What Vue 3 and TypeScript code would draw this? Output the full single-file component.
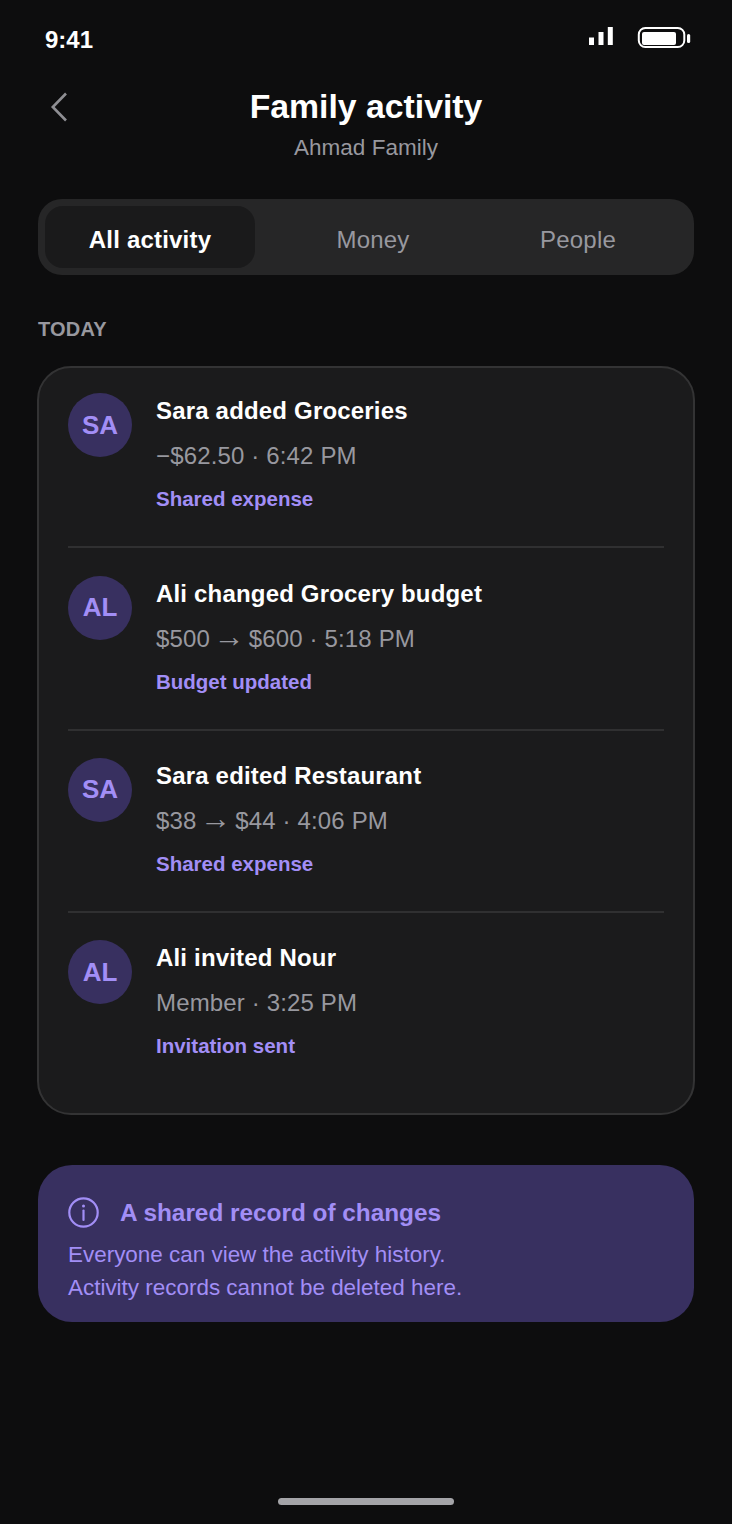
<script setup lang="ts">
interface Activity {
  initials: string;
  title: string;
  detail: string[];
  tag: string;
}

const tabs = ['All activity', 'Money', 'People'];

// detail is split where the arrow goes, the arrow is drawn a bit bigger than the text
const activities: Activity[] = [
  { initials: 'SA', title: 'Sara added Groceries', detail: ['−$62.50 · 6:42 PM'], tag: 'Shared expense' },
  { initials: 'AL', title: 'Ali changed Grocery budget', detail: ['$500 ', ' $600 · 5:18 PM'], tag: 'Budget updated' },
  { initials: 'SA', title: 'Sara edited Restaurant', detail: ['$38 ', ' $44 · 4:06 PM'], tag: 'Shared expense' },
  { initials: 'AL', title: 'Ali invited Nour', detail: ['Member · 3:25 PM'], tag: 'Invitation sent' },
];
</script>

<template>
  <div class="screen">
    <div class="status">
      <span class="time">9:41</span>
      <div class="status-icons">
        <svg class="signal" width="24" height="18" viewBox="0 0 24 18" fill="#fff">
          <rect x="0" y="10.5" width="5" height="7.5" />
          <rect x="9.5" y="5" width="5" height="13" />
          <rect x="18.8" y="0" width="5" height="18" />
        </svg>
        <svg width="56" height="24" viewBox="0 0 56 24" fill="none">
          <rect x="1.8" y="2" width="45.5" height="19" rx="6.5" stroke="#fff" stroke-width="2" />
          <rect x="5" y="6" width="34" height="13" rx="2" fill="#fff" />
          <rect x="50" y="8" width="3.2" height="9" rx="1.6" fill="#fff" />
        </svg>
      </div>
    </div>

    <header class="header">
      <svg class="back" width="18" height="30" viewBox="0 0 18 30" fill="none">
        <path d="M16 1.5 L2.8 15 L16 28.5" stroke="#8e8e93" stroke-width="2.6" />
      </svg>
      <h1>Family activity</h1>
      <p>Ahmad Family</p>
    </header>

    <nav class="tabs">
      <button v-for="(tab, i) in tabs" :key="tab" class="tab" :class="{ active: i === 0 }">{{ tab }}</button>
    </nav>

    <h2 class="section">TODAY</h2>

    <section class="card">
      <article v-for="item in activities" :key="item.title" class="row">
        <div class="avatar">{{ item.initials }}</div>
        <div class="body">
          <h3>{{ item.title }}</h3>
          <p class="detail">
            {{ item.detail[0] }}<template v-if="item.detail[1]"><span class="arrow">→</span>{{ item.detail[1] }}</template>
          </p>
          <p class="tag">{{ item.tag }}</p>
        </div>
      </article>
    </section>

    <section class="note">
      <div class="note-head">
        <svg width="31" height="31" viewBox="0 0 31 31" fill="none" stroke="#a28ef6">
          <circle cx="15.5" cy="15.5" r="14.2" stroke-width="2.2" />
          <path d="M15.5 13.5 V23" stroke-width="2.2" stroke-linecap="round" />
          <circle cx="15.5" cy="9" r="1.5" fill="#a28ef6" stroke="none" />
        </svg>
        <h3>A shared record of changes</h3>
      </div>
      <p>Everyone can view the activity history.<br />Activity records cannot be deleted here.</p>
    </section>

    <div class="home-bar"></div>
  </div>
</template>

<style>
html,
body {
  margin: 0;
  background: #0d0d0e;
}
</style>

<style scoped>
.screen {
  position: relative;
  box-sizing: border-box;
  width: 732px;
  height: 1524px;
  padding: 0 38px;
  background: #0d0d0e;
  color: #fff;
  font-family: 'Liberation Sans', Arial, sans-serif;
  overflow: hidden;
}

.status {
  display: flex;
  justify-content: space-between;
  align-items: flex-start;
  height: 78px;
  padding: 26px 2px 0 7px;
  box-sizing: border-box;
}

.time {
  font-size: 24px;
  font-weight: 700;
  line-height: 28px;
}

.status-icons {
  display: flex;
  align-items: flex-start;
  gap: 24px;
  margin-right: -1px;
}

.signal {
  margin-top: 1px;
}

.header {
  position: relative;
  height: 121px;
  text-align: center;
}

.back {
  position: absolute;
  left: 12px;
  top: 14px;
}

.header h1 {
  margin: 0;
  font-size: 33.75px;
  line-height: 56px;
  font-weight: 700;
}

.header p {
  margin: 0;
  font-size: 22.5px;
  line-height: 28px;
  color: #98989f;
}

.tabs {
  display: flex;
  box-sizing: border-box;
  height: 76px;
  padding: 7px;
  border-radius: 24px;
  background: #262627;
}

.tab {
  flex: none;
  width: 205px;
  border: 0;
  border-radius: 18px;
  background: transparent;
  color: #98989f;
  font-family: inherit;
  font-size: 24px;
  letter-spacing: 0.2px;
  padding: 6px 0 0;
}

.tab.active {
  width: 210px;
  margin-right: 15.5px;
  background: #1a1a1b;
  color: #fff;
  font-weight: 700;
}

.section {
  margin: 42px 0 25px;
  font-size: 20px;
  line-height: 24px;
  font-weight: 700;
  letter-spacing: 0.2px;
  color: #98989f;
}

.card {
  box-sizing: border-box;
  height: 748.5px;
  margin: 0 -1px 50.5px;
  padding: 0 29px;
  border: 2px solid #333334;
  border-radius: 34px;
  background: #1b1b1c;
}

.row {
  display: flex;
  gap: 24px;
  box-sizing: border-box;
  height: 182.4px;
  padding-top: 27.4px;
  border-bottom: 2px solid #303031;
}

.row:first-child {
  margin-top: -2.2px;
}

.row:last-child {
  border-bottom: 0;
}

.avatar {
  flex: none;
  display: flex;
  align-items: center;
  justify-content: center;
  width: 64px;
  height: 64px;
  border-radius: 50%;
  background: #383060;
  color: #a28ef6;
  font-size: 26px;
  font-weight: 700;
}

.body h3 {
  margin: 0;
  font-size: 24px;
  line-height: 36px;
  font-weight: 700;
  letter-spacing: 0.18px;
}

.detail {
  margin: 9px 0 0;
  font-size: 24px;
  line-height: 36px;
  letter-spacing: 0.15px;
  color: #98989f;
}

.arrow {
  margin: 0 -3px;
  font-size: 31px;
  line-height: 0;
}

.tag {
  margin: 12px 0 0;
  font-size: 20.5px;
  line-height: 26px;
  font-weight: 700;
  color: #a28ef6;
}

.note {
  box-sizing: border-box;
  height: 157px;
  padding: 32px 30px 0;
  border-radius: 34px;
  background: #383060;
  color: #a28ef6;
}

.note-head {
  display: flex;
  align-items: center;
  gap: 21px;
  margin-bottom: 10px;
}

.note-head h3 {
  margin: 0;
  font-size: 24.35px;
  line-height: 31px;
  font-weight: 700;
}

.note p {
  margin: 0;
  font-size: 22.45px;
  line-height: 33px;
}

.home-bar {
  position: absolute;
  left: 278px;
  top: 1498px;
  width: 176px;
  height: 7px;
  border-radius: 4px;
  background: #a4a4a8;
}
</style>
